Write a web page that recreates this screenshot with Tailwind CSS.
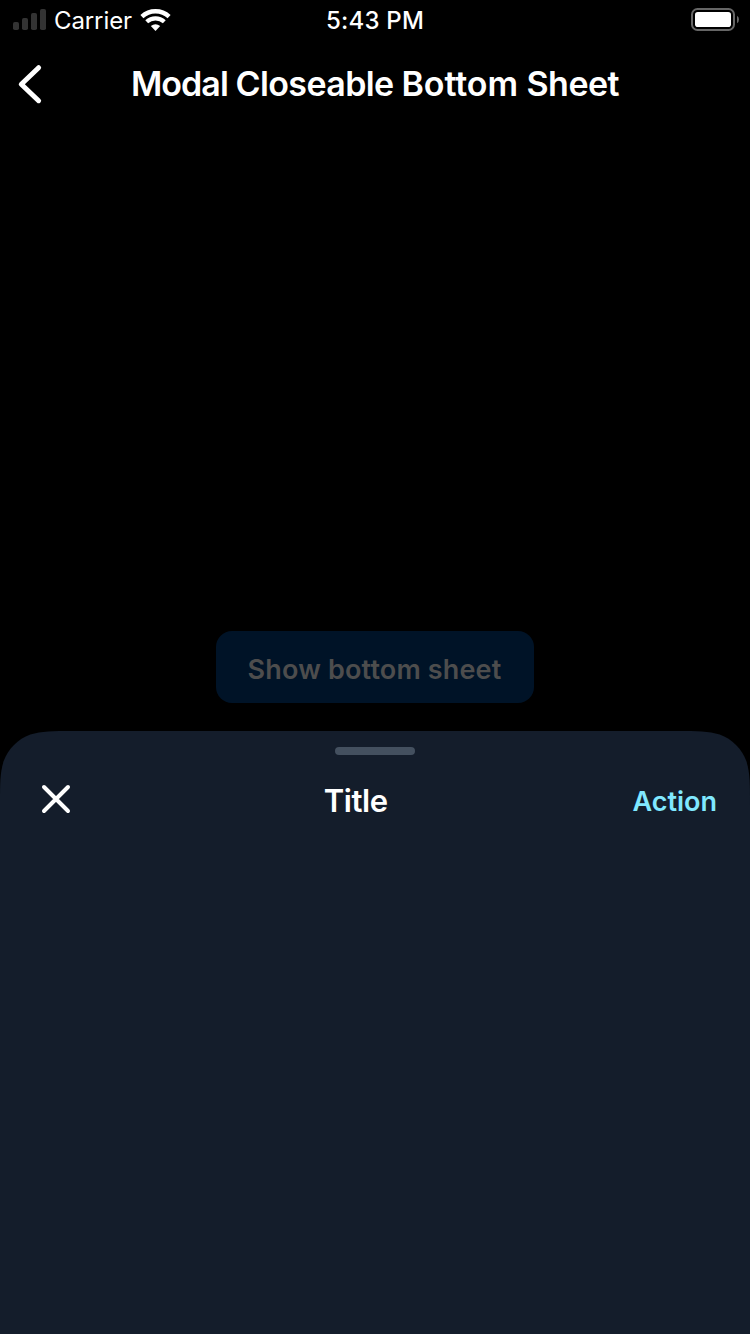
<!DOCTYPE html>
<html lang="en">
<head>
<meta charset="utf-8">
<title>Modal Closeable Bottom Sheet</title>
<script src="https://cdn.jsdelivr.net/npm/@tailwindcss/browser@4"></script>
</head>
<body class="bg-black">
<div class="flex h-[1334px] w-[750px] flex-col overflow-hidden bg-black font-['Inter',sans-serif] text-white">
  <header class="grid h-10 shrink-0 grid-cols-3 items-center">
    <div class="flex h-10 items-center pl-[13px]">
      <svg class="h-10 w-[33px] shrink-0" viewBox="0 0 33 40" fill="#333333">
        <rect x="0" y="22" width="6" height="8" rx="1.8"/><rect x="9" y="18" width="6" height="12" rx="1.8"/><rect x="18" y="13" width="6" height="17" rx="1.8"/><rect x="27" y="9" width="6" height="21" rx="1.8"/>
      </svg>
      <span class="ml-2 w-[78px] whitespace-nowrap pt-0.5 text-2xl leading-[38px] tracking-[-0.1px]">Carrier</span>
      <svg class="ml-2 h-10 w-[32px] shrink-0" viewBox="0 0 32 40" fill="none" stroke="white">
        <path d="M1.9 16.6A20 20 0 0 1 29.1 16.6" stroke-width="4.4"/>
        <path d="M6.7 21.8A13 13 0 0 1 24.3 21.8" stroke-width="4.2"/>
        <path d="M10.8 26.1Q15.5 22.3 20.2 26.1L15.5 31Z" fill="white" stroke="none"/>
      </svg>
    </div>
    <div class="whitespace-nowrap pt-0.5 text-center text-2xl leading-[38px] font-medium tracking-[0.2px]">5:43 PM</div>
    <svg class="h-10 w-[60px] justify-self-end" viewBox="0 0 60 40">
      <rect x="2" y="9" width="42" height="21" rx="5.5" fill="none" stroke="#666" stroke-width="2"/>
      <rect x="5" y="12" width="36" height="15" rx="2.8" fill="white"/>
      <path d="M47 15.8Q49 17 49 19.5T47 23.2Z" fill="#666"/>
    </svg>
  </header>
  <nav class="grid h-[88px] shrink-0 grid-cols-[60px_1fr_60px] items-center">
    <svg class="h-[88px] w-[60px]" viewBox="0 0 60 88" fill="none" stroke="white" stroke-width="5" stroke-linecap="round" stroke-linejoin="round"><path d="M38.6 27.7L21.3 44.2L38.6 60.7"/></svg>
    <h1 class="whitespace-nowrap text-center text-[34px] leading-[88px] font-semibold tracking-[-0.6px]"><span class="tracking-[-0.95px]">Modal </span>Closeable <span class="tracking-[-0.1px]">Bottom </span><span class="tracking-[-0.5px]">Sheet</span></h1>
  </nav>
  <main class="flex h-[603px] shrink-0 flex-col items-center justify-end pb-7">
    <button class="h-[72px] w-[318px] whitespace-nowrap rounded-2xl bg-[#001327] pr-px pt-[7px] text-[27px] font-semibold tracking-[0.15px] text-[#4d4d4d]">Show bottom sheet</button>
  </main>
  <section class="flex h-[603px] shrink-0 flex-col items-center bg-[#141d2b] pt-4 [clip-path:path('M73.4,0L676.6,0C697.8,0,708.3,0,719.7,3.6C732.1,8.1,741.9,17.9,746.4,30.3C750,41.7,750,52.2,750,73.4L750,603L0,603L0,73.4C0,52.2,0,41.7,3.6,30.3C8.1,17.9,17.9,8.1,30.3,3.6C41.7,0,52.2,0,73.4,0Z')]">
    <div class="h-2 w-20 rounded-full bg-[#44505f]"></div>
    <div class="flex h-[88px] w-full items-center justify-between pl-8 pr-[33px]">
      <svg class="size-12" viewBox="0 0 48 48" fill="none" stroke="white" stroke-width="4" stroke-linecap="round"><path d="M12 12L36 36M36 12L12 36"/></svg>
      <h2 class="whitespace-nowrap pt-1 pr-px text-[31px] font-semibold tracking-[-0.4px]">Title</h2>
      <button class="whitespace-nowrap pt-1.5 text-[27px] font-semibold text-[#80e8ff]">Action</button>
    </div>
  </section>
</div>
</body>
</html>
